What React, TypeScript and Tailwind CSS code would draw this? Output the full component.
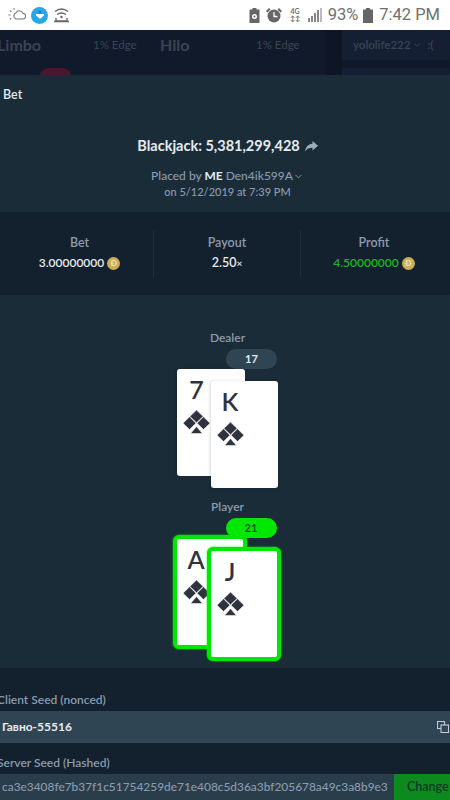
import React from "react";
import { ChevronDown } from "lucide-react";

const font = "font-['Lato','Noto_Sans',sans-serif]";

function Suit({ className = "" }: { className?: string }) {
  return (
    <svg width="27" height="24" viewBox="0 0 27 24" className={className} fill="#2f3340" stroke="#ffffff" strokeWidth="0.6">
      <polygon points="13.5,0 20.2,6.4 13.5,12.8 6.8,6.400" />
      <polygon points="6.5,6.800 13,13.200 6.500,19.600 0,13.200" />
      <polygon points="20.500,6.800 27,13.200 20.500,19.600 14,13.200" />
      <polygon points="13.5,16.500 19.500,23.600 7.500,23.600" />
    </svg>
  );
}

function Card({ rank, win, over }: { rank: string; win?: boolean; over?: boolean }) {
  return (
    <div
      className={`flex flex-col items-start bg-white shadow-[-1px_0_3px_rgba(0,0,0,0.15)] ${
        win
          ? "h-[114px] w-[74px] rounded-[6px] border-[4px] border-[#00e701] pl-[6px] pt-[6px] shadow-[0_0_2px_#00e701]"
          : "h-[107px] w-[68px] rounded-[3px] pl-[6px] pt-[6px]"
      } ${over ? (win ? "relative -ml-[40px] mt-[12px]" : "relative -ml-[34px] mt-[12px]") : ""}`}
    >
      <span className="flex h-[28px] w-[27px] items-center justify-center text-[25px] font-semibold leading-none text-[#2f3340]">
        {rank}
      </span>
      <Suit className="mt-[7px]" />
    </div>
  );
}

function Coin() {
  return (
    <span className="flex h-[13px] w-[13px] items-center justify-center rounded-full bg-[#c9ae5c] text-[8px] font-bold leading-none text-[#f1e6b8]">
      Ð
    </span>
  );
}

function Stat({ label, children, divider }: { label: string; children: React.ReactNode; divider?: boolean }) {
  return (
    <div className={`flex h-[47px] w-[147px] flex-col items-center pt-[5px] ${divider ? "border-l border-[#1d2f3d]" : ""}`}>
      <span className="text-[12.5px] font-semibold leading-[16px] text-[#8b9bb0]">{label}</span>
      <div className="mt-[4px] flex items-center gap-[3px] text-[12px] font-semibold leading-[16px]">{children}</div>
    </div>
  );
}

function StatusBar() {
  return (
    <div className="flex h-[30px] items-center justify-between bg-white pl-[8px] pr-[10px]">
      <div className="flex items-center gap-[5px]">
        <svg width="18" height="16" viewBox="0 0 18 16" fill="none" stroke="#777" strokeWidth="1.1">
          <path d="M8 12h6.500a2.800 2.800 0 0 0 .5-5.600 3.800 3.800 0 0 0-7-.6A3.300 3.300 0 0 0 8 12z" />
          <path d="M0.500 8h2M2 3.500l1.300 1.300M2 12.500l1.300-1.300M6 1v1.500" />
        </svg>
        <div className="flex h-[17px] w-[17px] items-center justify-center rounded-full bg-[#25a9e6]">
          <svg width="10" height="10" viewBox="0 0 10 10" fill="white">
            <path d="M1 4h8v1.500L5 9 1 5.500z" />
            <circle cx="5" cy="2" r="1.500" fill="#1673c9" />
          </svg>
        </div>
        <svg width="17" height="16" viewBox="0 0 17 16" fill="none" stroke="#666" strokeWidth="1.400">
          <path d="M2 4.500c4-3 9-3 13 0M4 7.500c3-2 6-2 9 0" />
          <circle cx="8.500" cy="10" r="1.200" fill="#666" stroke="none" />
          <path d="M3 11v3h11v-3M1 14.500h15" />
        </svg>
      </div>
      <div className="flex items-center text-[#707070]">
        <svg width="11" height="15" viewBox="0 0 11 15" fill="#666">
          <path d="M3.500 0h4v1.500H10.500V15H.5V1.500h3z" />
          <circle cx="5.500" cy="8.500" r="2.500" fill="white" />
          <circle cx="5.500" cy="8.500" r="1" />
        </svg>
        <svg width="16" height="15" viewBox="0 0 16 15" fill="#666" className="ml-[6px]">
          <circle cx="8" cy="8" r="6.500" />
          <path d="M8 4v4.500H11.500" stroke="white" strokeWidth="1.300" fill="none" />
          <path d="M0 3l3-3 1.500 1.500-3 3zM16 3l-3-3-1.500 1.500 3 3z" />
        </svg>
        <div className="ml-[8px] flex w-[11px] flex-col items-center text-[7px] font-bold leading-[7px]">
          <span>4G</span>
          <span>↕↕</span>
        </div>
        <svg width="15" height="14" viewBox="0 0 15 14" fill="#888" className="ml-[7px]">
          <rect x="0" y="10" width="2" height="4" />
          <rect x="3" y="8" width="2" height="6" />
          <rect x="6" y="5" width="2" height="9" />
          <rect x="9" y="2" width="2" height="12" />
          <rect x="12" y="0" width="2" height="14" fill="#bbb" />
        </svg>
        <span className="ml-[5px] font-['Roboto',sans-serif] text-[16.5px] leading-none">93%</span>
        <svg width="10" height="15" viewBox="0 0 10 15" fill="#666" className="ml-[5px]">
          <path d="M3 0h4v1.500h3V15H0V1.500h3z" />
        </svg>
        <span className="ml-[6px] font-['Roboto',sans-serif] text-[16.5px] leading-none">7:42 PM</span>
      </div>
    </div>
  );
}

export default function App() {
  return (
    <div className={`h-[800px] w-[450px] overflow-hidden bg-[#1b2c39] ${font}`}>
      <StatusBar />

      {/* Game list behind the modal */}
      <div className="relative flex h-[45px] overflow-hidden bg-[#111a2b] text-[#3b4354]">
        <div className="flex h-[30px] w-[325px] items-center">
          <span className="-ml-[3px] w-[96px] text-[16px] font-bold">Limbo</span>
          <span className="w-[67px] text-[11.5px]">1% Edge</span>
          <span className="w-[96px] text-[16px] font-bold">Hilo</span>
          <span className="text-[11.5px]">1% Edge</span>
        </div>
        <div className="w-[17px] bg-[#0e1626]" />
        <div className="flex flex-1 flex-col gap-[8px]">
          <div className="flex h-[30px] shrink-0 items-center gap-[2px] rounded-[3px] bg-[#151f33] pl-[11px] text-[11.5px] font-semibold">
            yololife222
            <ChevronDown size={10} />
            <span className="ml-[3px]">:(</span>
          </div>
          <div className="h-[20px] shrink-0 rounded-[3px] bg-[#151f33]" />
        </div>
        <div className="absolute left-[39px] top-[38px] h-[20px] w-[33px] rounded-full bg-[#4a1630]" />
      </div>

      {/* Bet modal */}
      <div className="flex h-[40px] items-center pl-[3px] text-[12.5px] font-semibold text-[#e2e8ee]">Bet</div>

      <div className="flex flex-col items-center pb-[12px] pl-[5px] pt-[21px]">
        <div className="flex h-[20px] items-center gap-[5px] text-[14.5px] font-bold text-[#e6ebf0]">
          Blackjack: 5,381,299,428
          <svg width="13" height="11" viewBox="0 0 13 11" fill="#9fadbb">
            <path d="M7.500 0L13 4.700 7.500 9.500V6.700C4 6.700 2 7.700 0 10.500 .5 6 3 3 7.500 2.700z" />
          </svg>
        </div>
        <div className="mt-[12px] flex h-[16px] items-center text-[12px] font-medium text-[#8b9bb0]">
          Placed by&nbsp;<b className="font-bold text-[#e6ebf0]">ME</b>&nbsp;Den4ik599A
          <ChevronDown size={11} />
        </div>
        <div className="h-[16px] text-[11px] font-medium leading-[16px] text-[#8b9bb0]">on 5/12/2019 at 7:39 PM</div>
      </div>

      <div className="flex h-[83px] items-start bg-[#12212d] pl-[6px] pt-[18px]">
        <Stat label="Bet">
          <span className="text-[#e6ebf0]">3.00000000</span>
          <Coin />
        </Stat>
        <Stat label="Payout" divider>
          <span className="text-[12.5px] text-[#e6ebf0]">
            2.50<span className="text-[10px]">×</span>
          </span>
        </Stat>
        <Stat label="Profit" divider>
          <span className="text-[#17b81f]">4.50000000</span>
          <Coin />
        </Stat>
      </div>

      <div className="flex flex-col items-center pb-[7px] pl-[5px] pt-[35px]">
        <span className="text-[12px] font-semibold leading-[16px] text-[#8b9bb0]">Dealer</span>
        <div className="mt-[3px] w-[101px]">
          <div className="ml-auto mr-[1px] flex h-[20px] w-[51px] items-center justify-center rounded-full bg-[#2f4553] text-[11px] font-bold text-[#e6ebf0]">
            17
          </div>
          <div className="flex items-start">
            <Card rank="7" />
            <Card rank="K" over />
          </div>
        </div>

        <span className="mt-[11px] text-[12px] font-semibold leading-[16px] text-[#8b9bb0]">Player</span>
        <div className="mt-[3px] -translate-x-[1px] w-[108px]">
          <div className="relative z-10 -mb-[3px] ml-auto mr-[4px] flex h-[20px] w-[51px] items-center justify-center rounded-full bg-[#00e701] text-[11px] font-bold text-[#14502a]">
            21
          </div>
          <div className="flex items-start">
            <Card rank="A" win />
            <Card rank="J" win over />
          </div>
        </div>
      </div>

      {/* Seeds */}
      <div className="h-[132px] bg-[#12212d] pt-[24px]">
        <div className="-ml-[3px] text-[12px] font-semibold leading-[16px] text-[#8b9bb0]">Client Seed (nonced)</div>
        <div className="mt-[3px] flex h-[32px] items-center justify-between bg-[#2f4553] pl-[2px] pr-[1px]">
          <span className="text-[12px] font-bold text-[#e6ebf0]">Гавно-55516</span>
          <svg width="12" height="12" viewBox="0 0 12 12" fill="none" stroke="#c3ccd6" strokeWidth="1.100">
            <rect x="0.500" y="0.500" width="7" height="7" />
            <rect x="4" y="4" width="7.500" height="7.500" fill="#2f4553" />
          </svg>
        </div>
        <div className="mt-[12px] -ml-[3px] text-[12px] font-semibold leading-[16px] text-[#8b9bb0]">Server Seed (Hashed)</div>
        <div className="mt-[3px] flex h-[26px] items-center bg-[#2a3d4b]">
          <span className="flex-1 overflow-hidden whitespace-nowrap pl-[2px] text-[11.9px] font-medium text-[#8b9bb0]">
            ca3e3408fe7b37f1c51754259de71e408c5d36a3bf205678a49c3a8b9e3
          </span>
          <div className="flex h-full w-[56px] items-center bg-[#0c8a1e] pl-[13px] text-[12.5px] font-semibold text-[#0e3a24]">
            Change
          </div>
        </div>
      </div>
    </div>
  );
}
